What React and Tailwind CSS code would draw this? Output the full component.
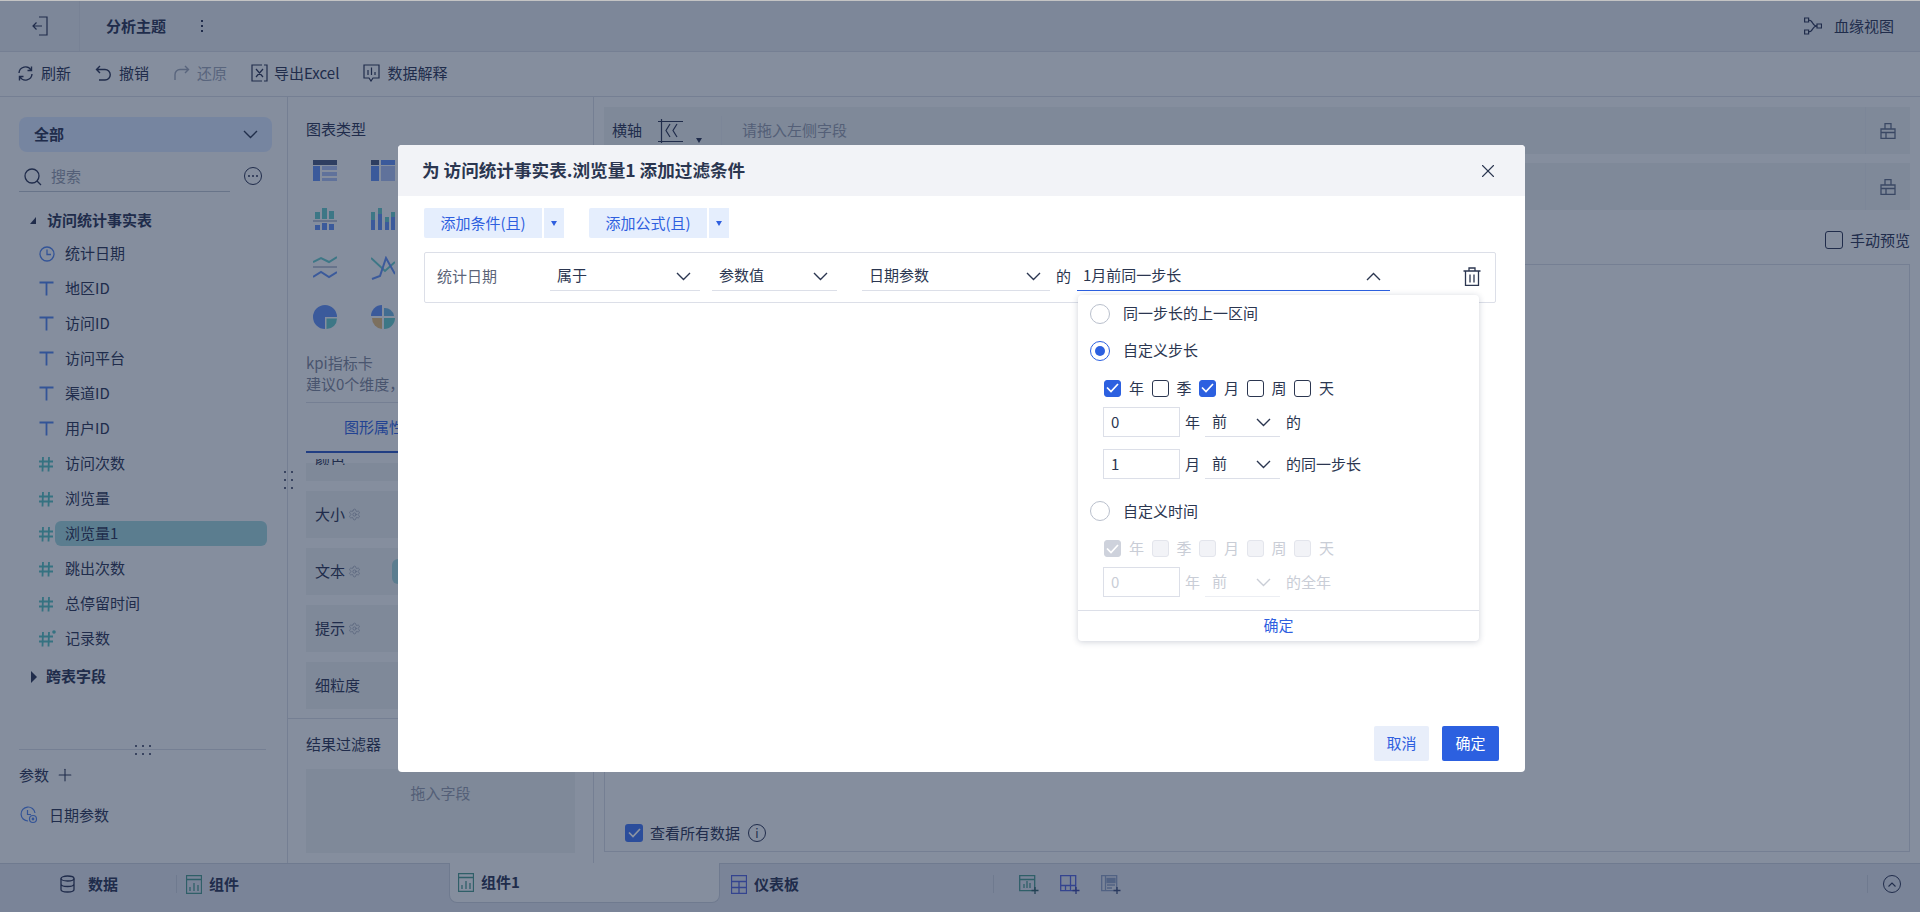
import { Plus, X, Settings } from 'lucide-react'

const Chevron = ({ up, className = 'text-[#2b3650]' }) => (
  <svg width="15" height="9" viewBox="0 0 15 9" fill="none" stroke="currentColor" strokeWidth="1.4" className={className}>
    <path d={up ? 'M1 8 7.5 1.5 14 8' : 'M1 1 7.5 7.5 14 1'} />
  </svg>
)

const IconT = () => (
  <svg width="15" height="15" viewBox="0 0 15 15" fill="none" stroke="#4f80e8" strokeWidth="1.8">
    <path d="M.5 1.500h14M7.500 1.500V14.500" />
  </svg>
)

const IconHash = ({ star }) => (
  <svg width="17" height="16" viewBox="0 0 17 16" fill="none" stroke="#52bcbc" strokeWidth="1.8" className="overflow-visible">
    <path d="M5 1 4.500 15.500M11 1 10.500 15.500M1 5.500h14M1 10.500h14" />
    {star && <circle cx="16" cy="1" r="1.800" fill="#52bcbc" stroke="none" />}
  </svg>
)

const IconClock = () => (
  <svg width="16" height="16" viewBox="0 0 16 16" fill="none" stroke="#4f80e8" strokeWidth="1.3">
    <circle cx="8" cy="8" r="7" />
    <path d="M8 3.500V8.500H12" />
  </svg>
)

const fields = [
  ['统计日期', <IconClock />],
  ['地区ID', <IconT />],
  ['访问ID', <IconT />],
  ['访问平台', <IconT />],
  ['渠道ID', <IconT />],
  ['用户ID', <IconT />],
  ['访问次数', <IconHash />],
  ['浏览量', <IconHash />],
  ['浏览量1', <IconHash />, true],
  ['跳出次数', <IconHash />],
  ['总停留时间', <IconHash />],
  ['记录数', <IconHash star />],
]

const ChartIcon = ({ children }) => (
  <svg width="24" height="24" viewBox="0 0 24 24" className="shrink-0">{children}</svg>
)

const chartIcons = [
  <ChartIcon key="a">
    <rect x="0" y="2" width="24" height="5" fill="#44557c" />
    <rect x="0" y="8" width="7" height="15" fill="#5f8df0" />
    <rect x="9" y="8" width="15" height="4" fill="#a9bdf0" />
    <rect x="9" y="14" width="15" height="4" fill="#a9bdf0" />
    <rect x="9" y="20" width="15" height="3" fill="#a9bdf0" />
  </ChartIcon>,
  <ChartIcon key="b">
    <rect x="0" y="2" width="8" height="5" fill="#44557c" />
    <rect x="10" y="2" width="14" height="5" fill="#5f8df0" />
    <rect x="0" y="8" width="8" height="15" fill="#5f8df0" />
    <rect x="10" y="8" width="14" height="15" fill="#a9bdf0" />
  </ChartIcon>,
  <ChartIcon key="c">
    <rect x="2" y="5" width="5" height="7" fill="#62c6c6" />
    <rect x="9" y="1" width="5" height="11" fill="#62c6c6" />
    <rect x="16" y="4" width="5" height="8" fill="#62c6c6" />
    <rect x="0" y="13" width="24" height="2" fill="#b7bfd0" />
    <rect x="2" y="18" width="5" height="5" fill="#5f8df0" />
    <rect x="9" y="16" width="5" height="7" fill="#5f8df0" />
    <rect x="16" y="17" width="5" height="6" fill="#5f8df0" />
  </ChartIcon>,
  <ChartIcon key="d">
    <rect x="0" y="5" width="4" height="8" fill="#62c6c6" />
    <rect x="0" y="13" width="4" height="10" fill="#5f8df0" />
    <rect x="7" y="1" width="4" height="6" fill="#62c6c6" />
    <rect x="7" y="7" width="4" height="16" fill="#5f8df0" />
    <rect x="14" y="10" width="4" height="5" fill="#62c6c6" />
    <rect x="14" y="15" width="4" height="8" fill="#5f8df0" />
    <rect x="20" y="5" width="4" height="5" fill="#62c6c6" />
    <rect x="20" y="10" width="4" height="13" fill="#5f8df0" />
  </ChartIcon>,
  <ChartIcon key="e">
    <g fill="none" strokeWidth="2">
      <path d="M0 6 8 2 16 6 24 1" stroke="#62c6c6" />
      <path d="M0 21 8 16 16 21 24 16" stroke="#5f8df0" />
    </g>
    <rect x="0" y="10" width="24" height="2" fill="#b7bfd0" />
  </ChartIcon>,
  <ChartIcon key="f">
    <g fill="none" strokeWidth="2">
      <path d="M0 2 14 15 24 6" stroke="#62c6c6" />
      <path d="M1 23 9 20 15 2 24 18" stroke="#5f8df0" />
    </g>
  </ChartIcon>,
  <ChartIcon key="g">
    <path d="M12 0A12 12 0 0 1 24 12H12V24A12 12 0 0 1 12 0Z" fill="#5f8df0" />
    <path d="M13.500 13.500H24A10.500 10.500 0 0 1 13.500 24Z" fill="#62c6c6" />
  </ChartIcon>,
  <ChartIcon key="h">
    <path d="M11 0A11 11 0 0 0 0 11H11Z" fill="#5f8df0" />
    <path d="M13 3A9 9 0 0 1 23 11H13Z" fill="#6cb2dc" />
    <path d="M1 13H11V24A11 11 0 0 1 1 13Z" fill="#e0b878" />
    <path d="M13 13H24A11 11 0 0 1 13 24Z" fill="#62c6c6" />
  </ChartIcon>,
]

const Card = ({ label, gear, pill }) => (
  <div className="mt-[10px] flex h-[47px] items-center bg-[#e6eaed] pl-[9px]">
    <span>{label}</span>
    {gear && <Settings size={13} strokeWidth={1.2} className="ml-[3px] text-[#8d95a8]" />}
    {pill && <span className="ml-[31px] h-[25px] w-[20px] rounded-l-[6px] bg-[#9ed2d9]" />}
  </div>
)

const LockIcon = () => (
  <svg width="16" height="16" viewBox="0 0 16 16" fill="none" stroke="#5d6983" strokeWidth="1.3">
    <path d="M1 6H15V15.500H1ZM5 6V.7H11V6M1 9.500H15M6 9.500V15.500" />
  </svg>
)

const AxisRow = ({ label, mt, icon }) => (
  <div className={`flex h-[47px] bg-[#e6eaed] ${mt}`}>
    <div className="flex flex-1 items-center pl-[8px]">
      <span>{label}</span>
      {icon}
    </div>
    <div className="flex w-[45px] items-center justify-center border-l border-[#e0e4ea]">
      <LockIcon />
    </div>
  </div>
)

const AxisIcon = () => (
  <>
    <svg width="25" height="24" viewBox="0 0 25 24" fill="none" stroke="#283050" strokeWidth="1.2" className="ml-[16px]">
      <path d="M0 2.500H25M0 22.500H25M3.500 0V24M12 5 8 11.500 12 18M19 5 15 11.500 19 18" />
    </svg>
    <span className="ml-[13px] mt-[20px] h-0 w-0 border-x-[3px] border-t-[5px] border-x-transparent border-t-[#283050]" />
    <span className="ml-[19px] h-[30px] w-px bg-[#e0e4ea]" />
    <span className="ml-[20px] text-[#9097a8]">请拖入左侧字段</span>
  </>
)

const Select = ({ text, ml = '', up, dim, widthCls }) => (
  <div className={`flex h-[29px] items-center justify-between border-b pl-[7px] pr-[9px] ${widthCls} ${ml} ${up ? 'border-[#2c60e0]' : dim ? 'border-[#eceef3]' : 'border-[#dcdfe8]'}`}>
    <span className={`-mt-[2px] ${dim ? 'text-[#c9cdd6]' : ''}`}>{text}</span>
    <Chevron up={up} className={dim ? 'text-[#c9cdd6]' : 'text-[#2b3650]'} />
  </div>
)

const Radio = ({ on, label, cls }) => (
  <div className={`flex items-center pl-[12px] ${cls}`}>
    <span className={`flex h-[20px] w-[20px] items-center justify-center rounded-full border ${on ? 'border-[#2c60e0]' : 'border-[#b9bfcc]'}`}>
      {on && <span className="h-[10px] w-[10px] rounded-full bg-[#2c60e0]" />}
    </span>
    <span className="ml-[13px]">{label}</span>
  </div>
)

const Check = ({ on, dim, label }) => (
  <div className="flex w-[47.5px] items-center">
    <span className={`flex h-[17px] w-[17px] items-center justify-center rounded-[3px] border ${
      on && !dim ? 'border-[#2c60e0] bg-[#2c60e0]' : on ? 'border-[#ced2dc] bg-[#ced2dc]' : dim ? 'border-[#e3e5ec] bg-[#f2f3f7]' : 'border-[#2b3650]'
    }`}>
      {on && (
        <svg width="13" height="10" viewBox="0 0 13 10" fill="none" stroke="#fff" strokeWidth="1.7">
          <path d="M1 4.500 5 8.500 12 1" />
        </svg>
      )}
    </span>
    <span className={`ml-[8px] ${dim ? 'text-[#c9cdd6]' : ''}`}>{label}</span>
  </div>
)

const NumRow = ({ value, unit, tail, dim, mt = '' }) => (
  <div className={`flex h-[30px] items-center pl-[25px] ${mt} ${dim ? 'text-[#c9cdd6]' : ''}`}>
    <div className="flex h-[30px] w-[77px] items-center border border-[#dcdfe8] pl-[7px]">{value}</div>
    <span className="ml-[5px]">{unit}</span>
    <Select text="前" dim={dim} ml="ml-[5px]" widthCls="w-[75px] mt-px" />
    <span className="ml-[6px]">{tail}</span>
  </div>
)

const Dots = ({ cols }) => (
  <div className={`grid gap-x-[5px] gap-y-[6px] ${cols === 3 ? 'grid-cols-3' : 'grid-cols-2'}`}>
    {[0, 1, 2, 3, 4, 5].map((i) => <i key={i} className="h-[2px] w-[2px] rounded-full bg-[#283050]" />)}
  </div>
)

export default function App() {
  return (
    <div className="relative flex h-[912px] w-[1920px] flex-col overflow-hidden bg-[#f2f4f7] font-['Noto_Sans_CJK_SC',sans-serif] text-[15px] text-[#283050]">
      <div className="h-px bg-[#c4c4c4]" />
      {/* top header */}
      <div className="flex h-[51px] items-center border-b border-[#d2d6e1] bg-[#e2e6ed]">
        <div className="flex h-full w-[80px] items-center justify-center border-r border-[#d8dce5]">
          <svg width="16" height="20" viewBox="0 0 16 20" fill="none" stroke="#283050" strokeWidth="1.2">
            <path d="M7 1H15V19H7M10 10H1M4.500 6.500 1 10l3.500 3.500" />
          </svg>
        </div>
        <span className="ml-[26px] font-semibold">分析主题</span>
        <span className="ml-[35px] flex flex-col gap-[3px]">
          <i className="h-[2px] w-[2px] bg-[#283050]" />
          <i className="h-[2px] w-[2px] bg-[#283050]" />
          <i className="h-[2px] w-[2px] bg-[#283050]" />
        </span>
        <div className="ml-auto mr-[26px] flex items-center gap-[12px]">
          <svg width="18" height="18" viewBox="0 0 18 18" fill="none" stroke="#283050" strokeWidth="1.200">
            <path d="M.600 1h4v4h-4ZM.600 13h4v4h-4ZM13 7h4.500v4H13ZM4.600 3c5 0 3 6 8.400 6M4.600 15c5 0 3-6 8.400-6" />
          </svg>
          <span>血缘视图</span>
        </div>
      </div>
      {/* toolbar */}
      <div className="flex h-[45px] items-center gap-[24px] border-b border-[#d2d6e1] pb-[2px] pl-[17px]">
        <div className="flex items-center gap-[7px]">
          <svg width="17" height="17" viewBox="0 0 17 17" fill="none" stroke="#283050" strokeWidth="1.4">
            <path d="M2 8A6.500 6.500 0 0 1 14 5M15 9A6.500 6.500 0 0 1 3 12M14.500 1.500V5.500H10.500M2.500 15.500V11.500H6.500" />
          </svg>
          <span>刷新</span>
        </div>
        <div className="flex items-center gap-[7px]">
          <svg width="17" height="17" viewBox="0 0 17 17" fill="none" stroke="#283050" strokeWidth="1.4">
            <path d="M5 1 1.500 4.500 5 8M1.500 4.500H10A5 5 0 0 1 10 15H4" />
          </svg>
          <span>撤销</span>
        </div>
        <div className="flex items-center gap-[7px] text-[#9aa2b4]">
          <svg width="17" height="17" viewBox="0 0 17 17" fill="none" stroke="currentColor" strokeWidth="1.4">
            <path d="M12 1 15.500 4.500 12 8M15.500 4.500H7A5 5 0 0 0 2 9.500V15" />
          </svg>
          <span>还原</span>
        </div>
        <div className="flex items-center gap-[6px]">
          <svg width="17" height="18" viewBox="0 0 17 18" fill="none" stroke="#283050" strokeWidth="1.2">
            <path d="M4 1H1V17H4M13 1H16V17H13M5 5 12 13M12 5 5 13M1 1H11M1 17H11" />
          </svg>
          <span>导出Excel</span>
        </div>
        <div className="flex items-center gap-[7px]">
          <svg width="17" height="18" viewBox="0 0 17 18" fill="none" stroke="#283050" strokeWidth="1.2">
            <path d="M1 1H16V14H10L8 17 6 14H1ZM5 6V11M8.500 3.500V11M12 8V11" />
          </svg>
          <span>数据解释</span>
        </div>
      </div>
      {/* main area */}
      <div className="flex h-[766px]">
        {/* fields panel */}
        <div className="relative flex w-[288px] flex-col border-r border-[#d2d6e1] pl-[19px]">
          <div className="mt-[20px] flex h-[35px] w-[253px] items-center justify-between rounded-[8px] bg-[#d4e2fb] pl-[15px] pr-[14px] font-semibold">
            全部
            <Chevron />
          </div>
          <div className="mt-[10px] flex h-[30px]">
            <div className="flex w-[211px] items-center border-b border-[#b9c0cd] pl-[5px]">
              <svg width="18" height="18" viewBox="0 0 18 18" fill="none" stroke="#283050" strokeWidth="1.3">
                <circle cx="8" cy="8" r="7" />
                <path d="m13 13 4 4" />
              </svg>
              <span className="ml-[9px] text-[#9097a8]">搜索</span>
            </div>
            <span className="ml-[14px] mt-[5px] flex h-[18px] w-[18px] items-center justify-center gap-[2px] rounded-full border border-[#283050]">
              <i className="h-[2px] w-[2px] rounded-full bg-[#283050]" />
              <i className="h-[2px] w-[2px] rounded-full bg-[#283050]" />
              <i className="h-[2px] w-[2px] rounded-full bg-[#283050]" />
            </span>
          </div>
          <div className="mt-[12px] flex h-[32px] items-center pl-[11px] font-semibold">
            <span className="mr-[11px] h-0 w-0 border-b-[7px] border-l-[6px] border-b-[#283050] border-l-transparent" />
            访问统计事实表
          </div>
          {fields.map(([name, icon, active]) => (
            <div key={name} className="flex h-[35px] items-center">
              <span className="ml-[19px] flex w-[17px] justify-center">{icon}</span>
              {active ? (
                <span className="flex h-[25px] w-[212px] items-center rounded-[6px] bg-[#9ed2d9] pl-[10px]">{name}</span>
              ) : (
                <span className="ml-[10px]">{name}</span>
              )}
            </div>
          ))}
          <div className="mt-[3px] flex h-[35px] items-center pl-[12px] font-semibold">
            <span className="mr-[9px] h-0 w-0 border-y-[6px] border-l-[6px] border-y-transparent border-l-[#283050]" />
            跨表字段
          </div>
          <div className="relative mt-[55px] w-[247px] border-t border-[#d2d6e1]">
            <div className="absolute left-[116px] top-[-5px]"><Dots cols={3} /></div>
          </div>
          <div className="mt-[14px] flex h-[22px] items-center">
            参数
            <Plus size={20} strokeWidth={1.3} className="ml-[6px]" />
          </div>
          <div className="mt-[18px] flex h-[22px] items-center pl-px">
            <svg width="18" height="18" viewBox="0 0 18 18" fill="none" stroke="#4f80e8" strokeWidth="1.2">
              <path d="M8 15A7 7 0 1 1 15 7M7.500 4V8.500H11" />
              <circle cx="13" cy="13" r="3.500" />
              <circle cx="13" cy="13" r="0.800" fill="#4f80e8" />
            </svg>
            <span className="ml-[11px]">日期参数</span>
          </div>
          <div className="absolute right-[-6px] top-[374px]"><Dots cols={2} /></div>
        </div>
        {/* chart settings panel */}
        <div className="flex w-[306px] flex-col border-r border-[#d2d6e1]">
          <div className="mt-[21px] pl-[18px] leading-[22px]">图表类型</div>
          <div className="mt-[18px] grid grid-cols-[58px_58px] gap-y-[25px] pl-[25px]">
            {chartIcons}
          </div>
          <div className="mt-[23px] pl-[18px] leading-[21px] text-[#7b8296]">
            <div>kpi指标卡</div>
            <div>建议0个维度，</div>
          </div>
          <div className="ml-[18px] mt-[8px] h-[51px] border-t border-b-2 border-t-[#d2d6e1] border-b-[#2a55c0]">
            <div className="ml-[38px] mt-[13px] text-[#2f5fdf]">图形属性</div>
          </div>
          <div className="ml-[18px] w-[269px]">
            <div className="relative h-[28px]">
              <div className="absolute inset-x-0 bottom-0 h-[18px] bg-[#e6eaed]" />
              <div className="absolute left-[9px] top-[6px] h-[6px] overflow-hidden">
                <div className="-mt-[11px]">颜色</div>
              </div>
            </div>
            <Card label="大小" gear />
            <Card label="文本" gear pill />
            <Card label="提示" gear />
            <Card label="细粒度" />
          </div>
          <div className="mt-[9px] border-t border-[#d2d6e1] pl-[18px]">
            <div className="mt-[14px] leading-[22px]">结果过滤器</div>
            <div className="mt-[14px] flex h-[84px] w-[269px] justify-center bg-[#e6eaed] pt-[13px] text-[#9097a8]">拖入字段</div>
          </div>
        </div>
        {/* preview */}
        <div className="flex flex-1 flex-col px-[10px]">
          <AxisRow label="横轴" mt="mt-[10px]" icon={<AxisIcon />} />
          <AxisRow label="纵轴" mt="mt-[9px]" />
          <div className="flex h-[54px] items-center justify-end pt-[6px]">
            <span className="h-[18px] w-[18px] rounded-[3px] border border-[#283050]" />
            <span className="ml-[7px]">手动预览</span>
          </div>
          <div className="flex h-[588px] flex-col justify-end border border-[#d2d6e1] pb-[7px] pl-[20px]">
            <div className="flex items-center">
              <span className="flex h-[18px] w-[18px] items-center justify-center rounded-[3px] bg-[#3f73f0]">
                <svg width="13" height="10" viewBox="0 0 13 10" fill="none" stroke="#fff" strokeWidth="1.7">
                  <path d="M1 4.500 5 8.500 12 1" />
                </svg>
              </span>
              <span className="ml-[7px]">查看所有数据</span>
              <span className="ml-[8px] flex h-[18px] w-[18px] items-center justify-center rounded-full border border-[#283050] text-[12px] leading-none">i</span>
            </div>
          </div>
        </div>
      </div>
      {/* bottom bar */}
      <div className="flex h-[49px] items-start border-t border-[#c6ccd8] bg-[#dde1eb]">
        <div className="ml-[60px] mt-[8px] flex h-[24px] items-center font-semibold">
          <svg width="15" height="18" viewBox="0 0 15 18" fill="none" stroke="#283050" strokeWidth="1.3">
            <ellipse cx="7.500" cy="3.500" rx="6.500" ry="2.500" />
            <path d="M1 3.500V14.500C1 16 4 17 7.500 17S14 16 14 14.500V3.500M1 9c0 1.500 3 2.500 6.500 2.500S14 10.500 14 9" />
          </svg>
          <span className="ml-[13px]">数据</span>
        </div>
        <span className="ml-[58px] mt-[11px] h-[18px] w-px bg-[#c6ccd8]" />
        <div className="ml-[9px] mt-[8px] flex h-[24px] items-center font-semibold">
          <svg width="16" height="19" viewBox="0 0 16 19" fill="none" stroke="#46968b" strokeWidth="1.3">
            <path d="M.5.500h15v18H.5ZM.5 4.500h15M4 16V12M8 16V8M12 16V10" />
          </svg>
          <span className="ml-[7px]">组件</span>
        </div>
        <div className="-mt-px ml-[210px] flex h-[40px] w-[271px] items-center rounded-b-[8px] border-x border-b border-[#c6ccd8] bg-[#f2f4f7] pl-[8px] font-semibold">
          <svg width="16" height="19" viewBox="0 0 16 19" fill="none" stroke="#46968b" strokeWidth="1.3">
            <path d="M.5.500h15v18H.5ZM.5 4.500h15M4 16V12M8 16V8M12 16V10" />
          </svg>
          <span className="ml-[7px]">组件1</span>
        </div>
        <div className="ml-[11px] mt-[8px] flex h-[24px] items-center font-semibold">
          <svg width="16" height="19" viewBox="0 0 16 19" fill="none" stroke="#5060d8" strokeWidth="1.3">
            <path d="M.5.500h15v18H.5ZM.5 6.500h15M.5 12.500h15M8 6.500v12" />
          </svg>
          <span className="ml-[7px]">仪表板</span>
        </div>
        <span className="ml-[194px] mt-[11px] h-[18px] w-px bg-[#c6ccd8]" />
        <div className="ml-[25px] mt-[9px] flex h-[24px] items-center gap-[20px]">
          <svg width="21" height="20" viewBox="0 0 21 20" fill="none" stroke="#46968b" strokeWidth="1.300">
            <path d="M.7.700h15v15H.7ZM.7 4.500h15M5 13V9M8 13V6M11 13V8" />
            <path d="M16 12v7M12.500 15.500h7" stroke="#2c5a62" />
          </svg>
          <svg width="21" height="20" viewBox="0 0 21 20" fill="none" stroke="#5060d8" strokeWidth="1.300">
            <path d="M.7.700h15v15H.7ZM.7 10.500h15M10.500.7v15M5.500 10.500v5" />
            <path d="M16 12v7M12.500 15.500h7" stroke="#3a44a0" />
          </svg>
          <svg width="21" height="20" viewBox="0 0 21 20" fill="none" stroke="#8a9cc0" strokeWidth="1.300">
            <path d="M.7.700h15v15H.7ZM4.500 1v14" />
            <path d="M6 3.500h8v4H6Z" fill="#8a9cc0" />
            <path d="M6 10h8M6 13h5" />
            <path d="M16 12v7M12.500 15.500h7" stroke="#3a4a78" />
          </svg>
        </div>
        <span className="ml-[745px] mt-[11px] h-[18px] w-px bg-[#c6ccd8]" />
        <span className="ml-[15px] mt-[11px] flex h-[18px] w-[18px] items-center justify-center rounded-full border border-[#283050]">
          <svg width="8" height="5" viewBox="0 0 8 5" fill="none" stroke="#283050" strokeWidth="1.1"><path d="M.5 4.500 4 1l3.500 3.500" /></svg>
        </span>
      </div>

      {/* dialog mask */}
      <div className="absolute inset-x-0 bottom-0 top-px bg-[#182845]/50">
        <div className="absolute left-[398px] top-[144px] flex h-[627px] w-[1127px] flex-col rounded-[4px] bg-white text-[#2b3650]">
          <div className="flex h-[51px] items-center justify-between rounded-t-[4px] bg-[#f2f3f7] pl-[24px] pr-[26px]">
            <span className="text-[17.6px] font-semibold">为 访问统计事实表.浏览量1 添加过滤条件</span>
            <X size={22} strokeWidth={1.2} />
          </div>
          <div className="ml-[26px] mt-[12px] flex h-[30px] text-[#2f5fdf]">
            <span className="flex w-[118px] items-center justify-center rounded-l-[2px] bg-[#e5eefd]">添加条件(且)</span>
            <span className="ml-[2px] flex w-[20px] items-center justify-center bg-[#e5eefd]">
              <i className="h-0 w-0 border-x-[3px] border-t-[5px] border-x-transparent border-t-[#2f5fdf]" />
            </span>
            <span className="ml-[25px] flex w-[118px] items-center justify-center rounded-l-[2px] bg-[#e5eefd]">添加公式(且)</span>
            <span className="ml-[2px] flex w-[20px] items-center justify-center bg-[#e5eefd]">
              <i className="h-0 w-0 border-x-[3px] border-t-[5px] border-x-transparent border-t-[#2f5fdf]" />
            </span>
          </div>
          <div className="relative ml-[26px] mt-[14px] flex h-[51px] w-[1072px] items-start rounded-[2px] border border-[#dcdfe8] pt-[9px]">
            <span className="ml-[12px] flex h-[29px] w-[113px] items-center text-[#5c6478]">统计日期</span>
            <Select text="属于" widthCls="w-[150px]" />
            <Select text="参数值" widthCls="w-[125px]" ml="ml-[12px]" />
            <Select text="日期参数" widthCls="w-[188px]" ml="ml-[25px]" />
            <span className="ml-[6px] flex h-[29px] items-center">的</span>
            <Select text="1月前同一步长" up widthCls="w-[313px]" ml="ml-[6px] !pl-[6px] !pr-[9px]" />
            <svg width="18" height="19" viewBox="0 0 18 19" fill="none" stroke="#2b3650" strokeWidth="1.300" className="ml-[73px] mt-[5px]">
              <path d="M.5 4h17M6 4V1h6v3M2.500 4v14.300h13V4M7 7.500v8M11 7.500v8" />
            </svg>
            {/* step popup */}
            <div className="absolute left-[653px] top-[42px] z-10 h-[346px] w-[401px] rounded-[4px] bg-white shadow-[0_1px_6px_rgba(30,45,80,0.22)]">
              <Radio label="同一步长的上一区间" cls="h-[37px]" />
              <Radio on label="自定义步长" cls="h-[37px]" />
              <div className="flex h-[38px] items-center pl-[26px]">
                <Check on label="年" />
                <Check label="季" />
                <Check on label="月" />
                <Check label="周" />
                <Check label="天" />
              </div>
              <NumRow value="0" unit="年" tail="的" />
              <NumRow value="1" unit="月" tail="的同一步长" mt="mt-[12px]" />
              <Radio label="自定义时间" cls="mt-[14px] h-[36px]" />
              <div className="mt-px flex h-[37px] items-center pl-[26px]">
                <Check on dim label="年" />
                <Check dim label="季" />
                <Check dim label="月" />
                <Check dim label="周" />
                <Check dim label="天" />
              </div>
              <NumRow value="0" unit="年" tail="的全年" dim />
              <div className="mt-[13px] flex h-[31px] items-center justify-center border-t border-[#dcdfe8] pb-[2px] text-[#2f5fdf]">确定</div>
            </div>
          </div>
          <div className="mt-auto flex justify-end gap-[13px] pb-[11px] pr-[26px]">
            <span className="flex h-[35px] w-[55px] items-center justify-center rounded-[2px] bg-[#e8eefa] text-[#2f5fdf]">取消</span>
            <span className="flex h-[35px] w-[57px] items-center justify-center rounded-[2px] bg-[#2c60e0] text-white">确定</span>
          </div>
        </div>
      </div>
    </div>
  )
}
